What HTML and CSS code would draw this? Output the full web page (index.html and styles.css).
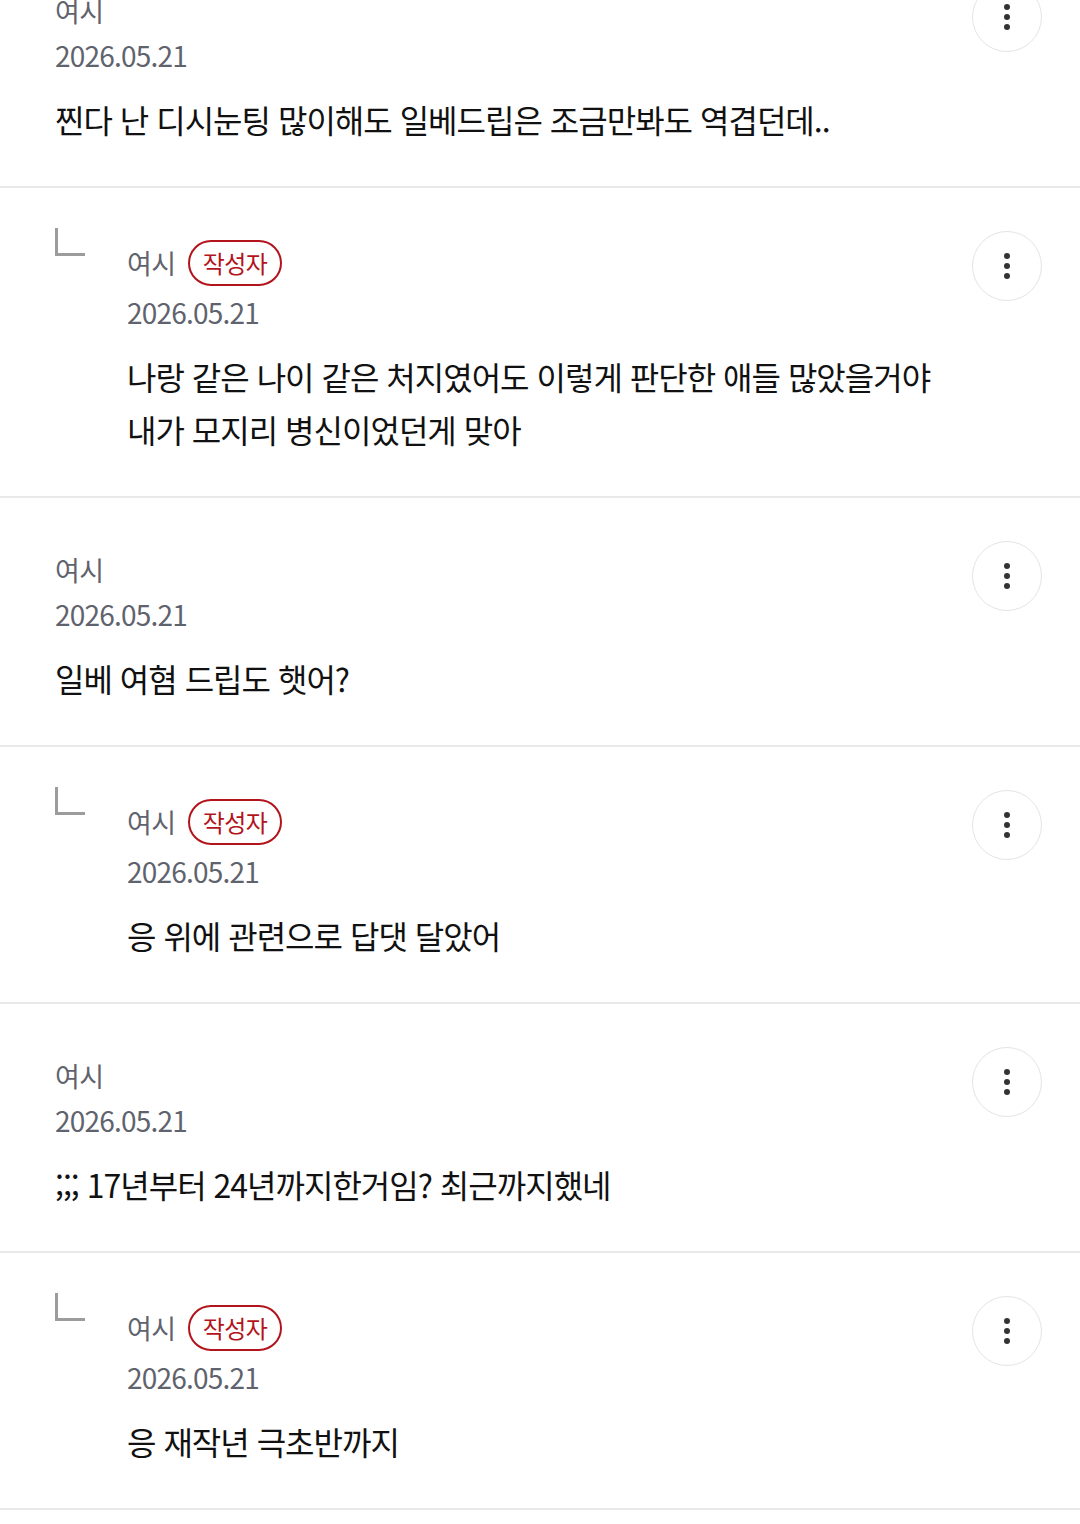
FILE: index.html
```html
<!DOCTYPE html>
<html lang="ko">
<head>
<meta charset="utf-8">
<link rel="stylesheet" href="styles.css">
</head>
<body>
<div class="list">
  <div class="comment">
    <div class="body">
      <div class="meta"><span class="name">여시</span></div>
      <div class="date">2026.05.21</div>
      <p class="text">찐다 난 디시눈팅 많이해도 일베드립은 조금만봐도 역겹던데..</p>
    </div>
    <button class="more"><span></span><span></span><span></span></button>
  </div>
  <div class="comment reply">
    <div class="reply-mark"></div>
    <div class="body">
      <div class="meta"><span class="name">여시</span><span class="badge">작성자</span></div>
      <div class="date">2026.05.21</div>
      <p class="text">나랑 같은 나이 같은 처지였어도 이렇게 판단한 애들 많았을거야<br>내가 모지리 병신이었던게 맞아</p>
    </div>
    <button class="more"><span></span><span></span><span></span></button>
  </div>
  <div class="comment">
    <div class="body">
      <div class="meta"><span class="name">여시</span></div>
      <div class="date">2026.05.21</div>
      <p class="text">일베 여혐 드립도 햇어?</p>
    </div>
    <button class="more"><span></span><span></span><span></span></button>
  </div>
  <div class="comment reply">
    <div class="reply-mark"></div>
    <div class="body">
      <div class="meta"><span class="name">여시</span><span class="badge">작성자</span></div>
      <div class="date">2026.05.21</div>
      <p class="text">응 위에 관련으로 답댓 달았어</p>
    </div>
    <button class="more"><span></span><span></span><span></span></button>
  </div>
  <div class="comment">
    <div class="body">
      <div class="meta"><span class="name">여시</span></div>
      <div class="date">2026.05.21</div>
      <p class="text">;;; 17년부터 24년까지한거임? 최근까지했네</p>
    </div>
    <button class="more"><span></span><span></span><span></span></button>
  </div>
  <div class="comment reply">
    <div class="reply-mark"></div>
    <div class="body">
      <div class="meta"><span class="name">여시</span><span class="badge">작성자</span></div>
      <div class="date">2026.05.21</div>
      <p class="text">응 재작년 극초반까지</p>
    </div>
    <button class="more"><span></span><span></span><span></span></button>
  </div>
</div>
</body>
</html>
```
FILE: styles.css
```css
html, body {
  margin: 0;
  padding: 0;
  background: #ffffff;
}
body {
  font-family: "Noto Sans CJK KR", "Noto Sans", sans-serif;
  color: #111111;
  overflow: hidden;
}
.list {
  margin-top: -61px;
}
.comment {
  display: flex;
  align-items: flex-start;
  padding: 43px 38px 40px 55px;
  border-bottom: 2px solid #e9e9e9;
}
.reply-mark {
  width: 30px;
  height: 28px;
  margin-top: -3px;
  margin-right: 42px;
  border-left: 3px solid #9c9c9c;
  border-bottom: 3px solid #9c9c9c;
  box-sizing: border-box;
  flex: none;
}
.body {
  flex: 1;
  padding-top: 11px;
  min-width: 0;
}
.reply .body {
  padding-top: 9px;
}
.meta {
  display: flex;
  align-items: center;
  height: 36px;
}
.reply .meta {
  height: 46px;
}
.name {
  font-size: 27px;
  line-height: 36px;
  color: #5f636d;
  letter-spacing: -0.5px;
}
.badge {
  margin-left: 12px;
  height: 46px;
  padding: 0 13px;
  box-sizing: border-box;
  border: 2px solid #b3141c;
  border-radius: 23px;
  color: #b3141c;
  font-size: 24px;
  line-height: 42px;
  letter-spacing: -0.5px;
}
.date {
  margin-top: 8px;
  font-size: 28px;
  line-height: 36px;
  color: #5f636d;
  letter-spacing: -0.8px;
}
.text {
  margin: 20px 0 0;
  font-size: 32px;
  line-height: 53px;
  letter-spacing: -1px;
  color: #111111;
}
.more {
  flex: none;
  width: 70px;
  height: 70px;
  margin: 0;
  padding: 0;
  border: 1.5px solid #e4e4e4;
  border-radius: 50%;
  background: #ffffff;
  display: flex;
  flex-direction: column;
  align-items: center;
  justify-content: center;
  gap: 4px;
}
.more span {
  width: 6px;
  height: 6px;
  border-radius: 50%;
  background: #333333;
}
```
